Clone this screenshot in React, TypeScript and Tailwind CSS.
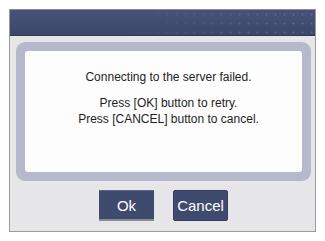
import React from "react";

export default function App() {
  return (
    <div className="w-[325px] h-[241px] bg-white pt-[9px] pl-[9px] font-['Liberation_Sans',Arial,sans-serif]">
      <div className="w-[307px] h-[223px] flex flex-col bg-[#e6e6e8] border border-[#9a9a9e] border-t-[#8c8c90]">
        {/* title bar */}
        <div className="relative h-[26px] shrink-0 bg-gradient-to-b from-[#47537a] to-[#3c4769] border-b border-[#2f3856] overflow-hidden">
          <div className="absolute inset-0 bg-[radial-gradient(circle,rgba(170,180,215,0.28)_0.8px,transparent_1.2px)] bg-[length:9px_9px] [mask-image:linear-gradient(to_right,transparent_35%,black_90%)]" />
        </div>

        {/* message panel */}
        <div className="mt-[6px] ml-[6px] w-[295px] h-[139px] rounded-[9px] bg-[#b6b9cb] p-[9px] shrink-0">
          <div className="h-full rounded-[3px] bg-[#fdfdfd] pt-[18px] pl-[10px] text-center text-[12px] leading-[16px] text-[#1e1e1e]">
            <p>Connecting to the server failed.</p>
            <p className="mt-[10px]">Press [OK] button to retry.</p>
            <p>Press [CANCEL] button to cancel.</p>
          </div>
        </div>

        {/* buttons */}
        <div className="mt-[9px] ml-[6px] w-[295px] flex justify-center gap-[19px]">
          <button className="w-[55px] h-[31px] bg-[#3f4a6f] border-t border-[#5b6588] border-b-2 border-b-[#8a8a8e] text-white text-[15px] leading-none">
            Ok
          </button>
          <button className="w-[55px] h-[31px] bg-[#3f4a6f] rounded-[2px] border border-[#343e60] text-white text-[15px] leading-none">
            Cancel
          </button>
        </div>
      </div>
    </div>
  );
}
